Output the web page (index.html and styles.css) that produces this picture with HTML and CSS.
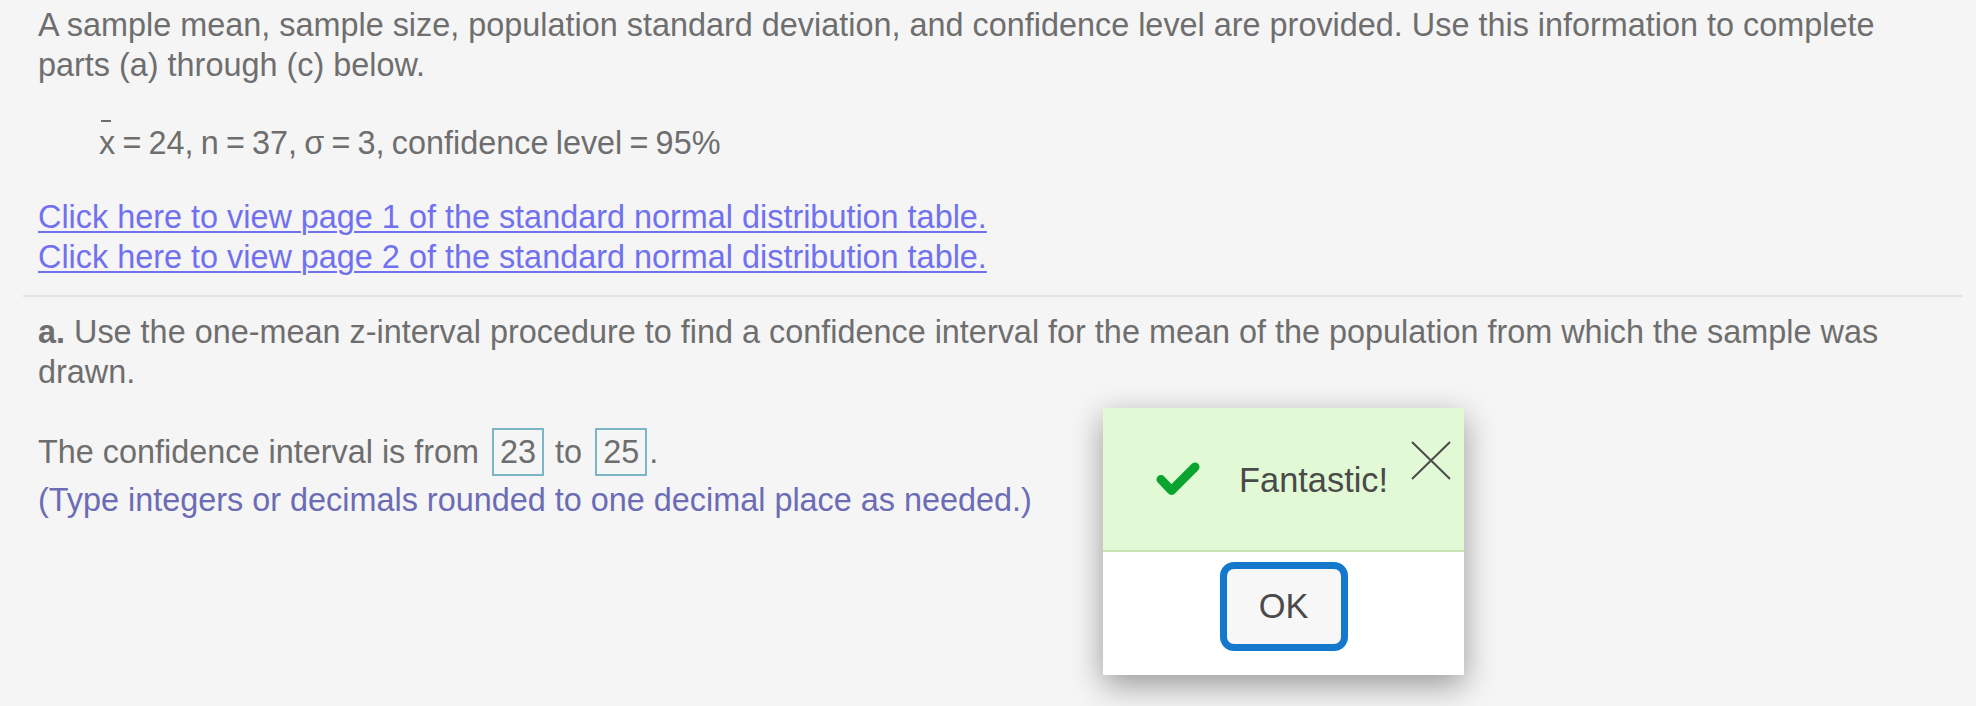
FILE: index.html
```html
<!DOCTYPE html>
<html>
<head>
<meta charset="utf-8">
<link rel="stylesheet" href="styles.css">
</head>
<body>
<div class="page">
  <section class="intro">
    <p class="lead">A sample mean, sample size, population standard deviation, and confidence level are provided. Use this information to complete parts (a) through (c) below.</p>
    <p class="given"><span class="xbar">x</span> = 24, n = 37, σ = 3, confidence level = 95%</p>
    <div class="links">
      <a href="#" class="link">Click here to view page 1 of the standard normal distribution table.</a>
      <a href="#" class="link">Click here to view page 2 of the standard normal distribution table.</a>
    </div>
  </section>
  <section class="part">
    <p class="question"><b class="label">a.</b> Use the one-mean z-interval procedure to find a confidence interval for the mean of the population from which the sample was drawn.</p>
    <p class="answer">The confidence interval is from <span class="box">23</span> to <span class="box">25</span>.</p>
    <p class="hint">(Type integers or decimals rounded to one decimal place as needed.)</p>
  </section>
</div>

<div class="dialog">
  <div class="dialog-head">
    <svg class="check" width="44" height="34" viewBox="0 0 44 34">
      <path d="M5 17.5 L15.5 28.5 L39 5" fill="none" stroke="#0ba431" stroke-width="9" stroke-linecap="round" stroke-linejoin="round"/>
    </svg>
    <span class="msg">Fantastic!</span>
    <svg class="close" width="40" height="39" viewBox="0 0 40 39">
      <path d="M1 1 L39 38 M39 1 L1 38" fill="none" stroke="#4a4a4a" stroke-width="2"/>
    </svg>
  </div>
  <div class="dialog-foot">
    <button class="ok">OK</button>
  </div>
</div>
</body>
</html>
```

FILE: styles.css
```css
html, body {
  margin: 0;
  padding: 0;
}
body {
  background: #f5f5f5;
  font-family: "Liberation Sans", Arial, Helvetica, sans-serif;
  font-size: 32.4px;
  line-height: 40px;
  color: #6e6e6e;
  width: 1976px;
  height: 706px;
  overflow: hidden;
  position: relative;
}
p {
  margin: 0;
}
.page {
  padding: 5px 14px 0 23px;
}
.intro {
  padding: 0 15px 18px 15px;
  border-bottom: 2px solid #dfe2e6;
}
.given {
  margin-top: 38px;
  padding-left: 61px;
  word-spacing: -1.8px;
}
.xbar {
  position: relative;
  display: inline-block;
}
.xbar::before {
  content: "";
  position: absolute;
  left: 2px;
  width: 10px;
  top: -3px;
  height: 2px;
  background: #6e6e6e;
}
.links {
  margin-top: 34px;
  display: flex;
  flex-direction: column;
  align-items: flex-start;
}
.link {
  display: block;
  color: #7171f0;
  text-decoration: underline;
  text-decoration-thickness: 2px;
  text-underline-offset: 3px;
}
.part {
  padding: 15px 15px 0 15px;
}
.label {
  font-weight: bold;
}
.answer {
  margin-top: 36px;
}
.box {
  display: inline-block;
  border: 2px solid #7ab6c6;
  line-height: 44px;
  padding: 0 6px;
  margin: 0 2px 0 4px;
}
.hint {
  margin-top: 4px;
  color: #6c6cb5;
}

.dialog {
  position: absolute;
  left: 1103px;
  top: 408px;
  width: 361px;
  background: #ffffff;
  box-shadow: 0 10px 30px rgba(0, 0, 0, 0.38);
}
.dialog-head {
  position: relative;
  height: 142px;
  background: #e2f9d5;
  border-bottom: 2px solid #c8e6b4;
  display: flex;
  align-items: center;
  padding-left: 53px;
  box-sizing: content-box;
}
.check {
  display: block;
  flex: none;
}
.msg {
  margin-left: 39px;
  font-size: 34.4px;
  color: #4a4a4a;
  line-height: 40px;
  padding-top: 2px;
}
.close {
  position: absolute;
  right: 13px;
  top: 33px;
}
.dialog-foot {
  display: flex;
  justify-content: center;
  padding: 10px 0 24px 0;
}
.ok {
  width: 128px;
  height: 89px;
  box-sizing: border-box;
  border: 7px solid #1479cc;
  border-radius: 14px;
  background: #f7f7f7;
  font-family: "Liberation Sans", Arial, Helvetica, sans-serif;
  font-size: 34.4px;
  color: #4a4a4a;
  padding: 0;
}
```
